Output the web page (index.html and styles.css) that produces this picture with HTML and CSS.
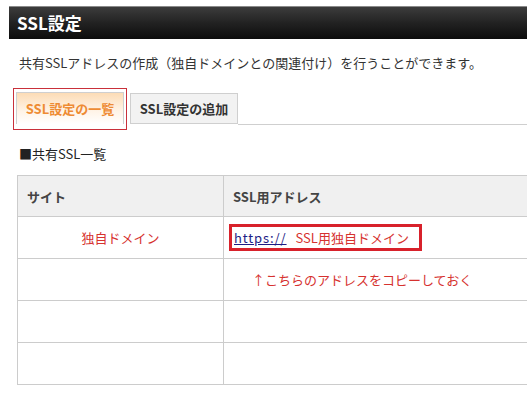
FILE: index.html
```html
<!DOCTYPE html>
<html lang="ja">
<head>
<meta charset="utf-8">
<link rel="stylesheet" href="styles.css">
</head>
<body>
<div class="page">
  <h1 class="title">SSL設定</h1>
  <p class="desc">共有SSLアドレスの作成（独自ドメインとの関連付け）を行うことができます。</p>
  <div class="tabs">
    <div class="highlight">
      <div class="tab tab-active">SSL設定の一覧</div>
    </div>
    <div class="tab tab-plain">SSL設定の追加</div>
    <div class="tab-fill"></div>
  </div>
  <p class="section">■共有SSL一覧</p>
  <div class="table-wrap">
    <table class="ssl-table">
      <tr class="head">
        <th class="col-site">サイト</th>
        <th>SSL用アドレス</th>
      </tr>
      <tr>
        <td class="site red">独自ドメイン</td>
        <td><span class="addr-box"><a class="link" href="#">https://</a><span class="red addr">SSL用独自ドメイン</span></span></td>
      </tr>
      <tr>
        <td></td>
        <td class="note red">↑こちらのアドレスをコピーしておく</td>
      </tr>
      <tr><td></td><td></td></tr>
      <tr><td></td><td></td></tr>
    </table>
  </div>
</div>
</body>
</html>
```

FILE: styles.css
```css
html, body {
  margin: 0;
  padding: 0;
  background: #fff;
  overflow: hidden;
}
body {
  font-family: "Noto Sans CJK JP", "Noto Sans", sans-serif;
  font-size: 13px;
  color: #333;
}
.page {
  padding-top: 6px;
}
.title {
  margin: 0 0 0 9px;
  height: 33px;
  box-sizing: border-box;
  border-top: 1px solid #8a8a8a;
  background: linear-gradient(#3c3c3c, #222 50%, #0c0c0c);
  color: #fff;
  font-size: 17px;
  font-weight: bold;
  line-height: 31px;
  padding-left: 8px;
}
.desc {
  margin: 15px 0 0 19px;
  line-height: 18px;
  color: #333;
}
.tabs {
  display: flex;
  align-items: flex-start;
  margin: 16px 0 0 13px;
}
.highlight {
  width: 114px;
  height: 42px;
  box-sizing: border-box;
  border: 1px solid #c9303a;
  padding: 3px 2px 0 2px;
}
.tab {
  box-sizing: border-box;
  width: 108px;
  text-align: center;
  font-weight: bold;
  font-size: 13px;
  border: 1px solid #cfcfcf;
}
.tab-active {
  height: 32px;
  border-bottom: none;
  background: linear-gradient(#fcdcb6, #fff4e8 60%, #fff);
  color: #ee8b33;
  line-height: 31px;
}
.tab-plain {
  margin: 5px 0 0 3px;
  height: 31px;
  background: #f2f2f2;
  color: #333;
  line-height: 30px;
}
.tab-fill {
  flex: 1;
  height: 36px;
  border-bottom: 1px solid #cfcfcf;
}
.section {
  margin: 15px 0 0 19px;
  line-height: 18px;
  color: #222;
}
.table-wrap {
  margin: 12px 0 0 17px;
  overflow: hidden;
}
.ssl-table {
  width: 560px;
  border-collapse: collapse;
}
.ssl-table th,
.ssl-table td {
  border: 1px solid #cccccc;
  height: 42px;
  padding: 0 9px;
  box-sizing: border-box;
  text-align: left;
  vertical-align: middle;
}
.ssl-table .head th {
  height: 41px;
  background: #f0f0f0;
  font-weight: bold;
  color: #444;
}
.col-site {
  width: 206px;
}
.ssl-table td.site {
  text-align: center;
}
.red {
  color: #d6322f;
}
.addr-box {
  display: inline-block;
  border: 3px solid #d8212b;
  padding: 1px 10px 1px 2px;
  margin-left: -4px;
  line-height: 19px;
}
.link {
  color: #1d1d85;
  text-decoration: underline;
  letter-spacing: 0.9px;
}
.addr {
  margin-left: 9px;
}
.ssl-table td.note {
  padding-left: 28px;
}
```
